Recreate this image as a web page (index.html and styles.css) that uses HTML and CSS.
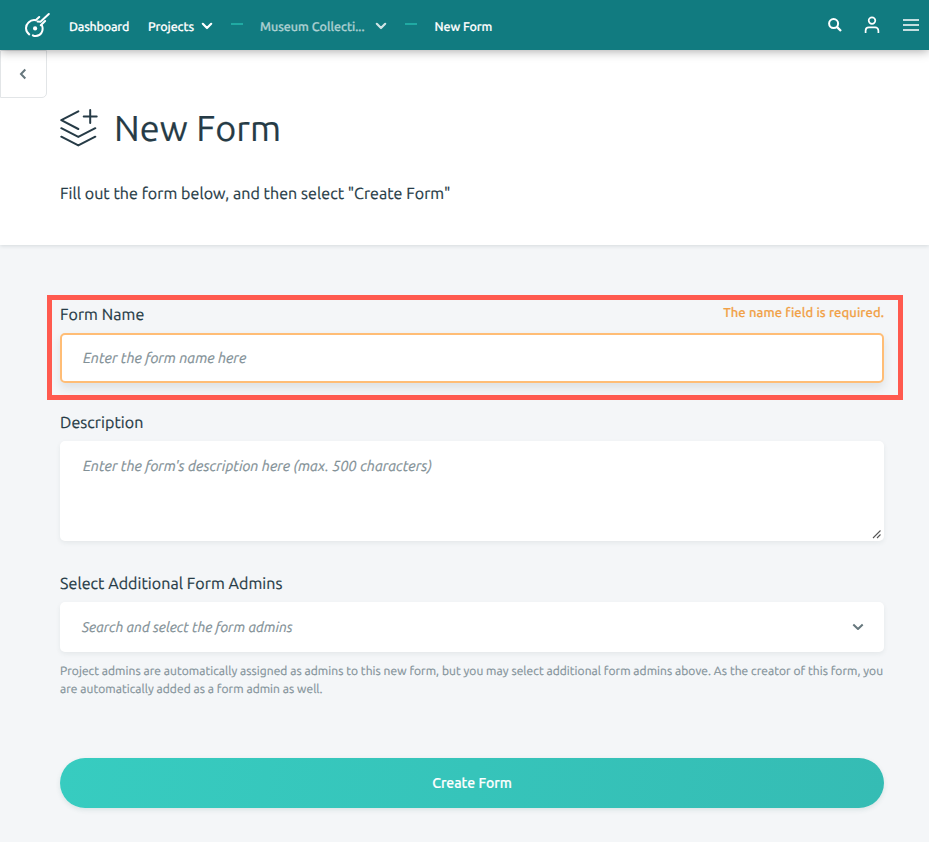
FILE: index.html
```html
<!DOCTYPE html>
<html lang="en">
<head>
<meta charset="utf-8">
<title>New Form</title>
<link rel="stylesheet" href="styles.css">
</head>
<body>
<header class="topbar">
  <a class="logo" aria-label="Home">
    <svg width="26" height="26" viewBox="0 0 26 26" fill="none" stroke="#fff" stroke-width="2" stroke-linecap="round">
      <path d="M5.200 22.400C1.200 19.500 1 13.500 4.500 10.400c2-1.900 4.500-2.700 7.200-2.200L15.200 5M13.500 9.500 16.500 9.800 24.800 2M16.800 13.200l4.300-4.200M18 13.500c2 5-1.200 10.600-6.300 10.500-1.100 0-2-.2-2.800-.7"/>
      <circle cx="11.100" cy="16.400" r="2.100" fill="#fff" stroke="none"/>
    </svg>
  </a>
  <nav class="crumbs">
    <a class="crumb dashboard">Dashboard</a>
    <a class="crumb projects">Projects</a>
    <svg class="chevron" width="12" height="8" viewBox="0 0 12 8"><path d="M1.800 1.800 6 6l4.200-4.200"/></svg>
    <span class="dash"></span>
    <a class="crumb museum">Museum Collecti...</a>
    <svg class="chevron faded" width="12" height="8" viewBox="0 0 12 8"><path d="M1.800 1.800 6 6l4.200-4.200"/></svg>
    <span class="dash second"></span>
    <a class="crumb current">New Form</a>
  </nav>
  <div class="tools">
    <svg width="14" height="14" viewBox="0 0 14 14" fill="none" stroke="#fff" stroke-width="2"><circle cx="5.600" cy="5.600" r="4.500"/><path d="m8.900 8.900 4.100 4.100" stroke-width="2.300"/></svg>
    <svg class="user" width="16" height="18" viewBox="0 0 16 18" fill="none" stroke="#fff" stroke-width="1.700"><circle cx="8" cy="4.600" r="3.300"/><path d="M1.600 17v-2.300c0-2 1.300-3.300 3.300-3.300h6.200c2 0 3.300 1.300 3.300 3.300V17"/></svg>
    <svg class="menu" width="16" height="12" viewBox="0 0 16 12" stroke="#fff" stroke-width="1.700"><path d="M0 1h16M0 6h16M0 11h16"/></svg>
  </div>
</header>
<section class="hero">
  <button class="back" aria-label="Back"><svg width="8" height="12" viewBox="0 0 8 12" fill="none" stroke="#66777d" stroke-width="2"><path d="M6.300 1.500 2 6l4.300 4.500"/></svg></button>
  <div class="title-row">
    <svg width="38" height="38" viewBox="0 0 38 38" fill="none" stroke="#263b46" stroke-width="2" stroke-linecap="round" stroke-linejoin="round"><path d="M18.300 2.300 1.300 11.200l17 8.800M1.300 19.200l17 8.700 17-8.700M1.300 27.700l17 8.700 17-8.700M30.200 1v13M23.700 7.500h13"/></svg>
    <h1>New Form</h1>
  </div>
  <p class="intro">Fill out the form below, and then select "Create Form"</p>
</section>
<main class="form">
  <div class="highlight">
    <div class="label-row"><label class="label">Form Name</label><span class="error">The name field is required.</span></div>
    <div class="control invalid"><span class="hint">Enter the form name here</span></div>
  </div>
  <div class="field description">
    <label class="label">Description</label>
    <div class="control area"><span class="hint">Enter the form's description here (max. 500 characters)</span>
      <svg class="grip" width="10" height="10" viewBox="0 0 10 10" stroke="#555" stroke-width="1.100"><path d="m1 9 7.500-7.500M5 9 8.500 5.500"/></svg>
    </div>
  </div>
  <div class="field admins">
    <label class="label">Select Additional Form Admins</label>
    <div class="control select"><span class="hint">Search and select the form admins</span>
      <svg class="chevron dark" width="12" height="8" viewBox="0 0 12 8"><path d="M1.300 1.500 6 6l4.700-4.500"/></svg>
    </div>
    <p class="help">Project admins are automatically assigned as admins to this new form, but you may select additional form admins above. As the creator of this form, you<br>are automatically added as a form admin as well.</p>
  </div>
  <button class="submit">Create Form</button>
</main>
</body>
</html>
```
FILE: styles.css
```css
* { box-sizing: border-box; }
body {
  margin: 0;
  min-height: 842px;
  background: #f4f6f8;
  color: #263b46;
  font-family: Ubuntu, "Noto Sans", sans-serif;
  text-rendering: geometricPrecision;
  -webkit-text-stroke: .2px;
}
h1, p { margin: 0; font-weight: 400; }
button { border: 0; font: inherit; padding: 0; }
svg { display: block; flex: none; }

.topbar {
  position: relative;
  z-index: 2;
  display: flex;
  align-items: center;
  height: 50px;
  padding: 0 10.500px 0 24px;
  background: #117b80;
  box-shadow: 0 1px 10px rgba(0, 0, 0, .35);
}
.crumbs { display: flex; align-items: center; margin-left: 19px; color: #fff; font-size: 12.500px; font-weight: 500; line-height: 20px; padding-top: 3px; }
.crumb { white-space: nowrap; flex: none; }
.dashboard { width: 79px; letter-spacing: -.2px; }
.projects { width: 53px; letter-spacing: -.12px; }
.museum { width: 115px; margin-left: 17.500px; opacity: .65; }
.current { margin-left: 18px; letter-spacing: -.1px; }
.chevron { fill: none; stroke: #fff; stroke-width: 2.200; stroke-linecap: round; stroke-linejoin: round; }
.crumbs .chevron { position: relative; left: -.5px; top: -1px; }
.faded { opacity: .8; }
.dash { width: 12px; height: 2px; margin: 0 0 6px 17.500px; background: #20aaa3; }
.tools { display: flex; align-items: center; margin-left: auto; padding-bottom: 1px; }
.user { margin-left: 22px; }
.menu { margin-left: 23px; }

.hero {
  position: relative;
  height: 195px;
  padding: 51px 60px 0;
  background: #fff;
  box-shadow: 0 1px 4px rgba(30, 50, 60, .14);
}
.back {
  position: absolute;
  left: 0;
  top: 0;
  display: flex;
  align-items: center;
  justify-content: center;
  width: 47px;
  height: 48px;
  padding-right: 2px;
  background: #fff;
  border: 1px solid #e2e5e7;
  border-radius: 0 0 5px 0;
}
.title-row { display: flex; align-items: center; height: 54px; gap: 16px; }
h1 { font-size: 36px; line-height: 54px; white-space: nowrap; letter-spacing: .1px; }
.intro { margin-top: 27px; font-size: 16px; line-height: 24px; white-space: nowrap; letter-spacing: .075px; }

.form { padding: 50px 26px 0 47px; }
.highlight { height: 105px; border: 5px solid #ff5a4f; padding: 3px 14px 0 8px; }
.label-row { display: flex; justify-content: space-between; height: 30px; white-space: nowrap; }
.label { font-size: 16px; line-height: 24px; white-space: nowrap; letter-spacing: .08px; }
.error { color: #f1a147; font-size: 13px; font-weight: 500; line-height: 21px; letter-spacing: .1px; }
.control {
  position: relative;
  display: flex;
  align-items: center;
  height: 50px;
  padding: 0 21px;
  background: #fff;
  border-radius: 5px;
  box-shadow: 0 2px 5px rgba(30, 50, 60, .07);
}
.invalid { border: 2px solid #ffbd76; padding-bottom: 2px; box-shadow: 0 5px 10px rgba(30, 50, 60, .1); }
.hint { color: #829096; font-size: 14.500px; font-style: italic; white-space: nowrap; }
.field { margin: 0 19px 0 13px; }
.field .label { display: block; height: 30px; }
.description { margin-top: 11px; }
.area { height: 100px; align-items: flex-start; padding: 16px 23px; }
.grip { position: absolute; right: 2px; bottom: 2px; }
.admins { margin-top: 31px; }
.select { justify-content: space-between; padding-left: 22px; padding-right: 20px; }
.select .hint { font-size: 14px; }
.dark { stroke: #66777d; stroke-linecap: butt; stroke-width: 2; }
.help { margin-top: 11px; color: #84939a; font-size: 12px; line-height: 18px; white-space: nowrap; letter-spacing: .06px; }
.submit {
  display: block;
  width: 824px;
  height: 50px;
  margin: 59px 0 0 13px;
  border-radius: 25px;
  background: linear-gradient(100deg, #37ccc0, #35bcb4);
  color: #fff;
  font-size: 14px;
  font-weight: 500;
  box-shadow: 0 2px 5px rgba(30, 100, 90, .12);
}
```
